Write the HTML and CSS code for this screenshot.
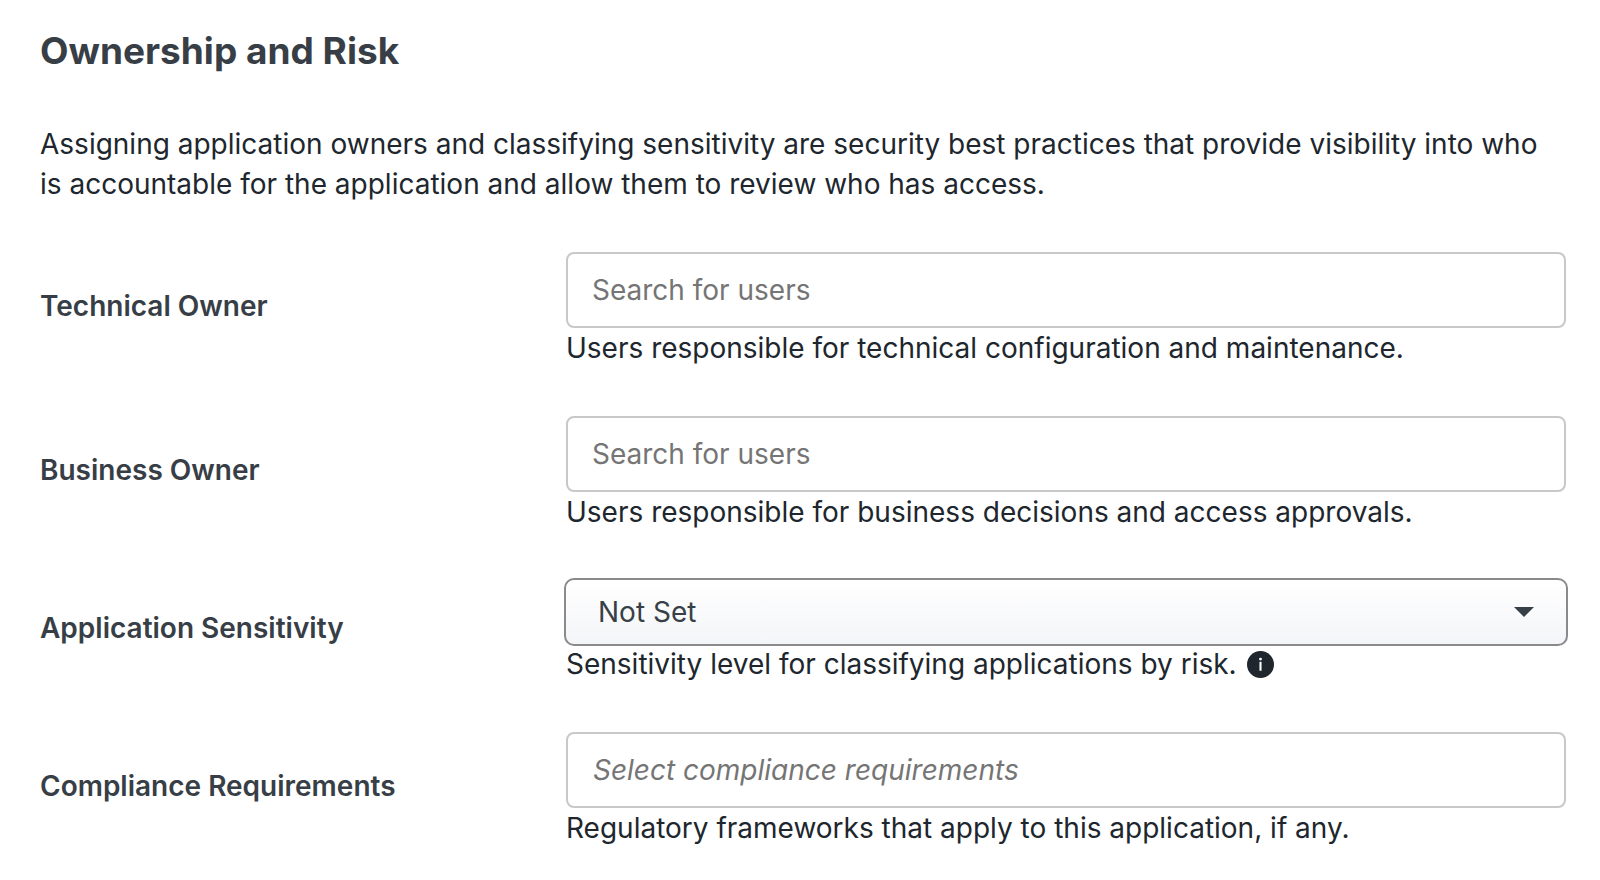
FILE: index.html
```html
<!DOCTYPE html>
<html lang="en">
  <head>
    <meta charset="utf-8">
    <title>Ownership and Risk</title>
    <link rel="stylesheet" href="styles.css">
  </head>
  <body>
    <form class="ownership">
      <h2>Ownership and Risk</h2>
      <p class="intro">Assigning application owners and classifying sensitivity are security best practices that provide visibility into who is accountable for the application and allow them to review who has access.</p>

      <div class="field">
        <label for="technical-owner">Technical Owner</label>
        <div class="control">
          <input type="text" id="technical-owner" placeholder="Search for users">
          <p class="hint">Users responsible for technical configuration and maintenance.</p>
        </div>
      </div>

      <div class="field">
        <label for="business-owner">Business Owner</label>
        <div class="control">
          <input type="text" id="business-owner" placeholder="Search for users">
          <p class="hint">Users responsible for business decisions and access approvals.</p>
        </div>
      </div>

      <div class="field">
        <label for="sensitivity">Application Sensitivity</label>
        <div class="control">
          <div class="select-wrap">
            <select id="sensitivity">
              <option>Not Set</option>
            </select>
            <svg class="caret" viewBox="0 0 20 10" aria-hidden="true"><path d="M0 0h20L10 10z"/></svg>
          </div>
          <p class="hint">Sensitivity level for classifying applications by risk.
            <svg class="info" viewBox="0 0 26 26" aria-hidden="true">
              <circle cx="13" cy="13" r="13"/>
              <circle class="mark" cx="13" cy="7.8" r="1.4"/>
              <rect class="mark" x="12" y="10.4" width="2" height="8.6"/>
            </svg>
          </p>
        </div>
      </div>

      <div class="field">
        <label for="compliance">Compliance Requirements</label>
        <div class="control">
          <input type="text" id="compliance" class="tags" placeholder="Select compliance requirements">
          <p class="hint">Regulatory frameworks that apply to this application, if any.</p>
        </div>
      </div>
    </form>
  </body>
</html>
```

FILE: styles.css
```css
body {
  margin: 0;
  background: #fff;
  color: #20262d;
  font-family: Inter, sans-serif;
  font-size: 28px;
  line-height: 40px;
}
.ownership {
  padding: 30px 34px 0 40px;
}
h2 {
  margin: 0 0 52px;
  color: #383e46;
  font-size: 37px;
  font-weight: 700;
  line-height: 42px;
}
.intro {
  margin: 0 0 48px;
}
.field {
  display: grid;
  grid-template-columns: 1fr 2fr;
  column-gap: 26px;
  align-items: center;
  margin-bottom: 48px;
}
.field label {
  padding-bottom: 8px;
  color: #383e46;
  font-weight: 600;
}
input {
  display: block;
  box-sizing: border-box;
  width: 100%;
  height: 76px;
  padding: 0 24px;
  border: 2px solid #c8c8c8;
  border-radius: 8px;
  background: #fff;
  color: #20262d;
  font: inherit;
}
input::placeholder {
  color: #757575;
  opacity: 1;
}
.tags {
  padding: 0 25px;
}
.tags::placeholder {
  font-style: italic;
}
/* the select is drawn a border's width larger than the text boxes */
.select-wrap {
  position: relative;
  margin: -2px;
}
select {
  display: block;
  width: 100%;
  height: 68px;
  padding: 0 32px;
  border: 2px solid #8a8a8a;
  border-radius: 10px;
  appearance: none;
  background: linear-gradient(#fff, #f4f5f8);
  color: #384047;
  font: inherit;
}
.caret {
  position: absolute;
  top: 29px;
  right: 34px;
  width: 20px;
  height: 10px;
  fill: #384047;
}
.hint {
  margin: 0;
}
.info {
  width: 27px;
  height: 27px;
  margin-left: 2px;
  vertical-align: -4px;
  fill: #20262d;
}
.info .mark {
  fill: #fff;
}
```
